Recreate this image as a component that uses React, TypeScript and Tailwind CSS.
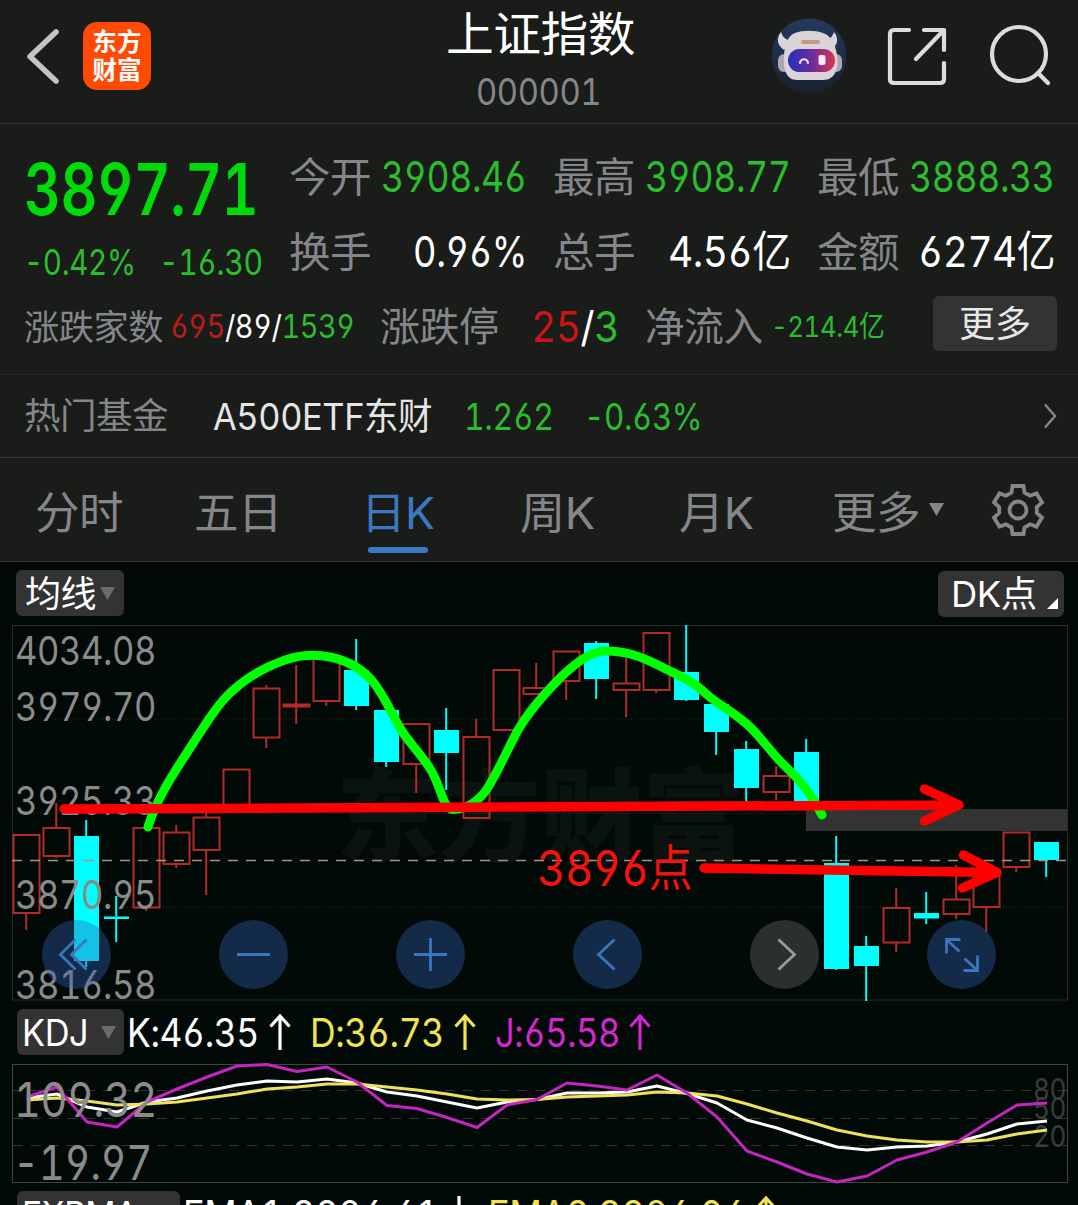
import { useLayoutEffect, useRef, useState, type ReactNode } from 'react';

type Candle = [kind: 'up' | 'down', top: number, bottom: number, high: number, low: number];

// body top, body bottom, wick high, wick low
const candles: Candle[] = [
  ['up', 835, 913, 835, 930],
  ['up', 828, 856, 803, 858],
  ['down', 836, 961, 820, 967],
  ['down', 916.5, 919, 896, 942],
  ['up', 828, 907.5, 828, 911],
  ['up', 832.5, 864, 825, 868],
  ['up', 817.5, 850, 810, 895],
  ['up', 769.5, 807, 769.5, 807],
  ['up', 688.5, 737.5, 685, 748],
  ['up', 704.5, 706.5, 665, 724],
  ['up', 656, 701, 656, 706],
  ['down', 670, 706, 639, 710],
  ['down', 710, 762, 710, 767],
  ['up', 724, 764, 724, 793],
  ['down', 730, 753, 708, 790],
  ['up', 737, 818, 719, 818],
  ['up', 670, 730, 670, 730],
  ['up', 688, 694, 663, 694],
  ['up', 651.5, 681, 651.5, 700],
  ['down', 643, 679, 641, 699],
  ['up', 683.5, 690, 658, 717],
  ['up', 633, 690, 633, 693],
  ['down', 672, 700, 625, 701],
  ['down', 704, 732, 697, 755],
  ['down', 749, 788, 741, 810],
  ['up', 776, 792, 766, 800],
  ['down', 752, 804, 739, 804],
  ['down', 863, 969, 836, 970],
  ['down', 946, 966, 936, 1001],
  ['up', 908, 942.5, 888, 952],
  ['down', 913, 918.5, 892, 924],
  ['up', 899.5, 914, 865, 919],
  ['up', 873, 907, 873, 932],
  ['up', 832.5, 867, 832.5, 872],
  ['down', 842, 860, 842, 877],
];

const kLine = [1098, 1094, 1107, 1112, 1102, 1098, 1091, 1085, 1081, 1082, 1079, 1083, 1092, 1096, 1102, 1108, 1102, 1099.5, 1093, 1093, 1092, 1086, 1093.5, 1103, 1120, 1128, 1138, 1147, 1150, 1147, 1146, 1142, 1134, 1124, 1121];
const dLine = [1100, 1098, 1101, 1105, 1104, 1102, 1098, 1094, 1089, 1087, 1084, 1084, 1087, 1090, 1094, 1099, 1100, 1099.5, 1097, 1096, 1095, 1092, 1093, 1096, 1104, 1113, 1121, 1130, 1136, 1140, 1142, 1142, 1140, 1134, 1130];
const jLine = [1097, 1087, 1122, 1127, 1102, 1089, 1077, 1066, 1064.5, 1071.5, 1067, 1082, 1105.5, 1108.5, 1117.5, 1127.5, 1105, 1099.5, 1083, 1086, 1090, 1075, 1093, 1117, 1151, 1162, 1174, 1182, 1176, 1160, 1152, 1142, 1123, 1105, 1103];

const toPoints = (ys: number[]) => ys.map((y, i) => `${27 + i * 30},${y}`).join(' ');

// Squeezes a figure into the width of its column
function Fit({ w, className = '', children }: { w: number; className?: string; children: ReactNode }) {
  const ref = useRef<HTMLSpanElement>(null);
  const [scale, setScale] = useState(1);

  useLayoutEffect(() => {
    if (ref.current) setScale(w / ref.current.offsetWidth);
  }, [w]);

  return (
    <span className={`block shrink-0 whitespace-nowrap leading-none ${className}`} style={{ width: w }}>
      <span ref={ref} className="inline-block origin-left" style={{ transform: `scaleX(${scale})` }}>
        {children}
      </span>
    </span>
  );
}

function Header() {
  return (
    <header className="flex h-[124px] shrink-0 border-b border-[#31322e]">
      <div className="flex w-[445px] items-start pl-[26px] pt-[22px]">
        <svg width="34" height="68" viewBox="0 0 34 68" fill="none" stroke="#c4c4c4" strokeWidth="5.5" strokeLinecap="round" strokeLinejoin="round">
          <path d="M30 10 4 34.500 30 59" />
        </svg>
        <div className="ml-[23px] flex h-[68px] w-[68px] flex-col items-center justify-center rounded-[14px] bg-[#ff4a05] text-[24.500px] font-bold leading-[28px] tracking-normal text-white">
          <span>东方</span>
          <span>财富</span>
        </div>
      </div>
      <div className="flex w-[190px] flex-col items-center">
        <Fit w={189} className="mt-[10px] text-[47px] text-white">上证指数</Fit>
        <Fit w={125} className="ml-[-4px] mt-[16px] text-[37px] text-[#85868b]">000001</Fit>
      </div>
      <div className="flex flex-1 items-start pl-[136px] pt-[18px]">
        <svg width="76" height="76" viewBox="0 0 76 76">
          <defs>
            <linearGradient id="visor">
              <stop offset="0" stopColor="#2531b8" />
              <stop offset="0.5" stopColor="#6a2c9e" />
              <stop offset="1" stopColor="#d8344f" />
            </linearGradient>
            <linearGradient id="disc" x2="0" y2="1">
              <stop offset="0" stopColor="#25395c" />
              <stop offset="1" stopColor="#1a2130" />
            </linearGradient>
          </defs>
          <circle cx="38" cy="38" r="37.500" fill="url(#disc)" />
          <path d="M10 14c-5 6-4 13 3 18l9-10c-6 1-10-2-12-8ZM63 14c5 6 4 13-3 18l-9-10c6 1 10-2 12-8Z" fill="#d9d6da" />
          <rect x="7" y="36" width="12" height="18" rx="6" fill="#aaa7b0" />
          <rect x="59" y="36" width="12" height="18" rx="6" fill="#aaa7b0" />
          <path d="M24 15c8-3 20-3 28 0 8 3 12 10 14 22 2 14-2 25-14 25H26c-11 0-14-11-13-25 1-12 4-19 11-22Z" fill="#d8d4d8" />
          <rect x="30" y="22" width="19" height="4" rx="2" fill="#c79a7c" />
          <rect x="17" y="31" width="47" height="23" rx="11.500" fill="url(#visor)" />
          <path d="M29 45c1-5 7-5 8 0" fill="none" stroke="#e8dcff" strokeWidth="2.200" strokeLinecap="round" />
          <rect x="47.500" y="37" width="7" height="10" rx="2" fill="#fbe9f2" />
        </svg>
        <svg className="ml-[39px] mt-[7px]" width="62" height="62" viewBox="0 0 62 62" fill="none" stroke="#dcdcdc" strokeWidth="4.200" strokeLinecap="round" strokeLinejoin="round">
          <path d="M23 5H8Q4 5 4 9v45q0 4 4 4h46q4 0 4-4V38M38 5h20v20M57 6 30 34" />
        </svg>
        <svg className="ml-[40px] mt-[6px]" width="64" height="64" viewBox="0 0 64 64" fill="none" stroke="#dcdcdc" strokeWidth="4.200" strokeLinecap="round">
          <circle cx="31" cy="30" r="27" />
          <path d="m50 49 10 10" />
        </svg>
      </div>
    </header>
  );
}

function Stat({ label, value, w, color }: { label: string; value: string; w: number; color: string }) {
  return (
    <div className="flex h-[44px] w-[238px] items-center justify-between">
      <Fit w={82} className="pt-[2px] text-[41px] text-[#85868b]">{label}</Fit>
      <Fit w={w} className={`text-[43px] ${color}`}>{value}</Fit>
    </div>
  );
}

function Quote() {
  return (
    <section className="h-[250px] shrink-0">
      <div className="flex pl-[24px] pt-[30px]">
        <div className="w-[265px]">
          <Fit w={234} className="text-[71px] font-semibold text-[#00d90a]">3897.71</Fit>
          <div className="mt-[19px] flex text-[36px] text-[#2bbd2e]">
            <Fit w={112}>-0.42%</Fit>
            <Fit w={104} className="ml-[23px]">-16.30</Fit>
          </div>
        </div>
        <div className="grid grid-cols-3 content-start gap-x-[26px] gap-y-[31px]">
          <Stat label="今开" value="3908.46" w={146} color="text-[#2bbd2e]" />
          <Stat label="最高" value="3908.77" w={146} color="text-[#2bbd2e]" />
          <Stat label="最低" value="3888.33" w={146} color="text-[#2bbd2e]" />
          <Stat label="换手" value="0.96%" w={114} color="text-white" />
          <Stat label="总手" value="4.56亿" w={123} color="text-white" />
          <Stat label="金额" value="6274亿" w={137} color="text-white" />
        </div>
      </div>
      <div className="mt-[17px] flex h-[55px] items-center pl-[24px]">
        <Fit w={139} className="pt-[6px] text-[35px] text-[#85868b]">涨跌家数</Fit>
        <Fit w={185} className="ml-[7px] pt-[5px] text-[32px] text-white">
          <span className="text-[#b81c1c]">695</span>/89/<span className="text-[#2bbd2e]">1539</span>
        </Fit>
        <Fit w={119} className="ml-[25px] pt-[5px] text-[40px] text-[#85868b]">涨跌停</Fit>
        <Fit w={88} className="ml-[32px] pt-[5px] text-[42px] text-white">
          <span className="text-[#cc1414]">25</span>/<span className="text-[#2bbd2e]">3</span>
        </Fit>
        <Fit w={118} className="ml-[26px] pt-[5px] text-[40px] text-[#85868b]">净流入</Fit>
        <Fit w={113} className="ml-[8px] pt-[3px] text-[29px] text-[#2bbd2e]">-214.4亿</Fit>
        <button className="mb-[2px] ml-[49px] flex h-[55px] w-[124px] items-center justify-center rounded-md bg-[#333333] text-[36px] leading-none tracking-normal text-[#e8e8e8]">更多</button>
      </div>
    </section>
  );
}

function FundRow() {
  return (
    <section className="flex h-[84px] shrink-0 items-center border-b border-t border-b-[#363633] border-t-[#262725] pl-[24px]">
      <Fit w={144} className="text-[36px] text-[#85868b]">热门基金</Fit>
      <Fit w={219} className="ml-[45px] text-[37px] text-[#e6e6e6]">A500ETF东财</Fit>
      <Fit w={90} className="ml-[32px] text-[37px] text-[#2bbd2e]">1.262</Fit>
      <Fit w={118} className="ml-[30px] text-[37px] text-[#2bbd2e]">-0.63%</Fit>
      <svg className="ml-[341px]" width="14" height="26" viewBox="0 0 14 26" fill="none" stroke="#85868b" strokeWidth="2.500">
        <path d="M2 1.500 12 13 2 24.500" />
      </svg>
    </section>
  );
}

function Tabs() {
  return (
    <nav className="flex h-[104px] shrink-0 items-start border-b border-[#363633] pl-[35px] pt-[33px] text-[44px] text-[#85868b]">
      <Fit w={88}>分时</Fit>
      <Fit w={88} className="ml-[71px]">五日</Fit>
      <div className="ml-[79px] flex w-[76px] flex-col text-[#3b79c2]">
        <Fit w={74}>日K</Fit>
        <div className="ml-[7px] mt-[12px] h-[6px] w-[60px] rounded-full bg-[#3b79c2]" />
      </div>
      <Fit w={75} className="ml-[83px]">周K</Fit>
      <Fit w={75} className="ml-[84px]">月K</Fit>
      <Fit w={88} className="ml-[78px]">更多</Fit>
      <svg className="ml-[9px] mt-[12px]" width="15" height="13" viewBox="0 0 15 13">
        <path d="M0 0h15L7.500 13Z" fill="#85868b" />
      </svg>
      <svg className="ml-[47px] mt-[-8px]" width="54" height="54" viewBox="-1 -1 54 54" fill="none" stroke="#85868b" strokeWidth="3.800">
        <path d="M20.500 2h11l1 6.500 5.500 3.200 6.500-2.300 5.500 9-5.200 4.600v6l5.200 4.600-5.500 9-6.500-2.300-5.500 3.200-1 6.500h-11l-1-6.500-5.500-3.200-6.500 2.300-5.500-9L7.200 29v-6L2 18.400l5.500-9 6.500 2.300 5.500-3.200Z" />
        <circle cx="26" cy="26" r="8.500" />
      </svg>
    </nav>
  );
}

function Candles() {
  return (
    <g>
      {candles.map(([kind, top, bottom, high, low], i) => {
        const x = 26.2 + i * 30;
        const color = kind === 'up' ? '#b32a26' : '#00ffff';
        return (
          <g key={i} stroke={color} strokeWidth="2">
            {high < top && <line x1={x} x2={x} y1={high} y2={top} />}
            {low > bottom && <line x1={x} x2={x} y1={bottom} y2={low} />}
            {kind === 'up' ? (
              <rect x={x - 12.700} y={top} width="26" height={bottom - top} fill="none" />
            ) : (
              <rect x={x - 12.200} y={top} width="25" height={bottom - top} fill={color} stroke="none" />
            )}
          </g>
        );
      })}
    </g>
  );
}

const priceLabels: [string, number][] = [
  ['4034.08', 665],
  ['3979.70', 720.5],
  ['3925.33', 814.5],
  ['3870.95', 908.5],
  ['3816.58', 998.5],
];

const controls = [
  { icon: 'M-1 -15-16 0-1 15M10-15-5 0 10 15', blue: true },
  { icon: 'M-16.500 0h33', blue: true },
  { icon: 'M-16.500 0h33M0-16.500v33', blue: true },
  { icon: 'M7-15-9 0 7 15', blue: true },
  { icon: 'M-6-15 10 0-6 15', blue: false },
  { icon: 'M-15-1v-14h14M-14-14-2-3M3 4 15 15M16 1v15H2', blue: true },
];

function PriceChart() {
  return (
    <div className="relative h-[388px] shrink-0">
      <svg width="1078" height="388" viewBox="0 618 1078 388" fill="none">
        <text x="336" y="854" fontSize="102" fontWeight="900" textLength="408" fill="#0b1310">东方财富</text>
        <rect x="12.500" y="625.500" width="1055" height="374.500" stroke="#2b2a25" />
        {[719, 813.5, 907].map(y => (
          <line key={y} x1="13" x2="1067" y1={y} y2={y} stroke="#33261d" strokeDasharray="1 2" />
        ))}
        <Candles />
        <rect x="806" y="809" width="261" height="22" fill="#333333" />
        <line x1="12" x2="1067" y1="860.500" y2="860.500" stroke="#a8957c" strokeWidth="1.300" strokeDasharray="10 8" />
        {priceLabels.map(([label, y]) => (
          <text key={label} x="15" y={y} fontSize="40" textLength="141" lengthAdjust="spacingAndGlyphs" fill="#8b8b8b">{label}</text>
        ))}
        {/* double top outline */}
        <path
          d="M148 827C158 795 176 770 190 748C205 725 217 705 231 692C245 679 262 668 285 660C300 655 315 654 330 657C345 660 362 668 374 683C385 697 392 715 402 731C410 744 424 757 432 772C442 790 443 809 453 809.500C466 809 478 802 487 789C500 768 508 748 518 730C528 713 545 693 562 676C575 664 590 651 606 651C626 651 640 656 660 666C675 674 690 679 702 690C714 703 735 712 751 728C765 742 772 754 786 767C800 780 812 794 822 815"
          stroke="#00ff00" strokeWidth="9" strokeLinecap="round"
        />
        <g stroke="#ff0000" strokeWidth="9.500" strokeLinecap="round" strokeLinejoin="round">
          <path d="M64 809 959 805M924.500 789 959 805 924.500 821" />
          <path d="M704 868 997 872.500M963.500 855 997 872.500 962.500 888" />
        </g>
        <text x="537" y="886" fontSize="49" textLength="155" lengthAdjust="spacingAndGlyphs" fill="#f5120c">3896点</text>
      </svg>
      <div className="absolute left-[42px] top-[302px] flex gap-[108px]">
        {controls.map(({ icon, blue }) => (
          <button key={icon} className={`h-[69px] w-[69px] rounded-full ${blue ? 'bg-[#325fb9]/38' : 'bg-[#787878]/35'}`}>
            <svg width="69" height="69" viewBox="-34.500 -34.500 69 69" fill="none" stroke={blue ? '#3b74bf' : '#9a9a9a'} strokeWidth="2.800">
              <path d={icon} />
            </svg>
          </button>
        ))}
      </div>
    </div>
  );
}

function Arrow({ className = '', down = false }: { className?: string; down?: boolean }) {
  return (
    <svg className={`shrink-0 ${className}`} width="22" height="36" viewBox="0 0 22 36" fill="none" stroke="currentColor" strokeWidth="3.200">
      <path d={down ? 'M11 0v34M2 24l9 10 9-10' : 'M11 36V2M1.500 12.500 11 2l9.500 10.500'} />
    </svg>
  );
}

function Caret() {
  return (
    <svg className="shrink-0" width="15" height="13" viewBox="0 0 15 13">
      <path d="M0 0h15L7.500 13Z" fill="#6b6b6b" />
    </svg>
  );
}

function KdjChart() {
  return (
    <svg className="block shrink-0" width="1078" height="130" viewBox="0 1058 1078 130" fill="none">
      <rect x="12.500" y="1064.500" width="1055" height="118" stroke="#43453f" />
      {[1090.5, 1118.5, 1145.5].map(y => (
        <line key={y} x1="13" x2="1067" y1={y} y2={y} stroke="#33342f" strokeDasharray="10 8" />
      ))}
      <g fontSize="30" fill="#393d3a">
        <text x="1033" y="1100" textLength="33" lengthAdjust="spacingAndGlyphs">80</text>
        <text x="1033" y="1119" textLength="33" lengthAdjust="spacingAndGlyphs">50</text>
        <text x="1033" y="1147" textLength="33" lengthAdjust="spacingAndGlyphs">20</text>
      </g>
      <g strokeWidth="3" strokeLinejoin="round">
        <polyline points={toPoints(kLine)} stroke="#ffffff" />
        <polyline points={toPoints(dLine)} stroke="#f0e05a" />
        <polyline points={toPoints(jLine)} stroke="#c425c0" />
      </g>
      <g fontSize="48" fill="#8b8b8b">
        <text x="14" y="1117" textLength="143" lengthAdjust="spacingAndGlyphs">109.32</text>
        <text x="13" y="1180" textLength="139" lengthAdjust="spacingAndGlyphs">-19.97</text>
      </g>
    </svg>
  );
}

export default function App() {
  return (
    <div className="flex h-[1205px] w-[1078px] flex-col overflow-hidden bg-[#1a1c19] font-[Inter,'Noto_Sans_CJK_SC',sans-serif] tracking-[-0.03em] [font-feature-settings:'cv03','cv04','tnum','kern'_0]">
      <Header />
      <Quote />
      <FundRow />
      <Tabs />
      <main className="flex flex-1 flex-col overflow-hidden bg-[#010a06]">
        <div className="flex h-[56px] shrink-0 items-start justify-between pl-[16px] pr-[14px] pt-[8px] text-white">
          <button className="flex h-[46px] w-[108px] items-center gap-1 rounded-md bg-[#333333] pl-[9px]">
            <Fit w={71} className="pt-[2px] text-[36px]">均线</Fit>
            <Caret />
          </button>
          <button className="mt-px flex h-[46px] w-[126px] items-center rounded-md bg-[#333333] pl-[12px]">
            <Fit w={86} className="text-[36px]">DK点</Fit>
            <svg className="ml-[11px] mt-[18px]" width="11" height="11" viewBox="0 0 11 11">
              <path d="M11 0v11H0Z" fill="#fff" />
            </svg>
          </button>
        </div>
        <PriceChart />
        <div className="flex h-[52px] shrink-0 items-center pl-[17px] text-[39px] text-white">
          <button className="flex h-[46px] w-[107px] items-center rounded-md bg-[#333333] pl-[5px]">
            <Fit w={66} className="mr-[13px] text-[37px]">KDJ</Fit>
            <Caret />
          </button>
          <Fit w={132} className="ml-[3px]">K:46.35</Fit>
          <Arrow className="ml-[10px]" />
          <Fit w={134} className="ml-[19px] text-[#f2e355]">D:36.73</Fit>
          <Arrow className="ml-[10px] text-[#f2e355]" />
          <Fit w={125} className="ml-[19px] text-[#d426ce]">J:65.58</Fit>
          <Arrow className="ml-[9px] text-[#d426ce]" />
        </div>
        <KdjChart />
        <div className="flex h-[52px] shrink-0 items-center pl-[17px] text-[39px] text-white">
          <button className="flex h-[46px] w-[163px] items-center rounded-md bg-[#333333] pl-[5px]">
            <Fit w={116} className="mr-[13px] text-[37px]">EXPMA</Fit>
            <Caret />
          </button>
          <Fit w={256} className="ml-[3px]">EMA1:3896.61</Fit>
          <Arrow className="ml-[9px]" down />
          <Fit w={258} className="ml-[18px] text-[#f2e355]">EMA2:3896.06</Fit>
          <Arrow className="ml-[9px] text-[#f2e355]" />
        </div>
      </main>
    </div>
  );
}
